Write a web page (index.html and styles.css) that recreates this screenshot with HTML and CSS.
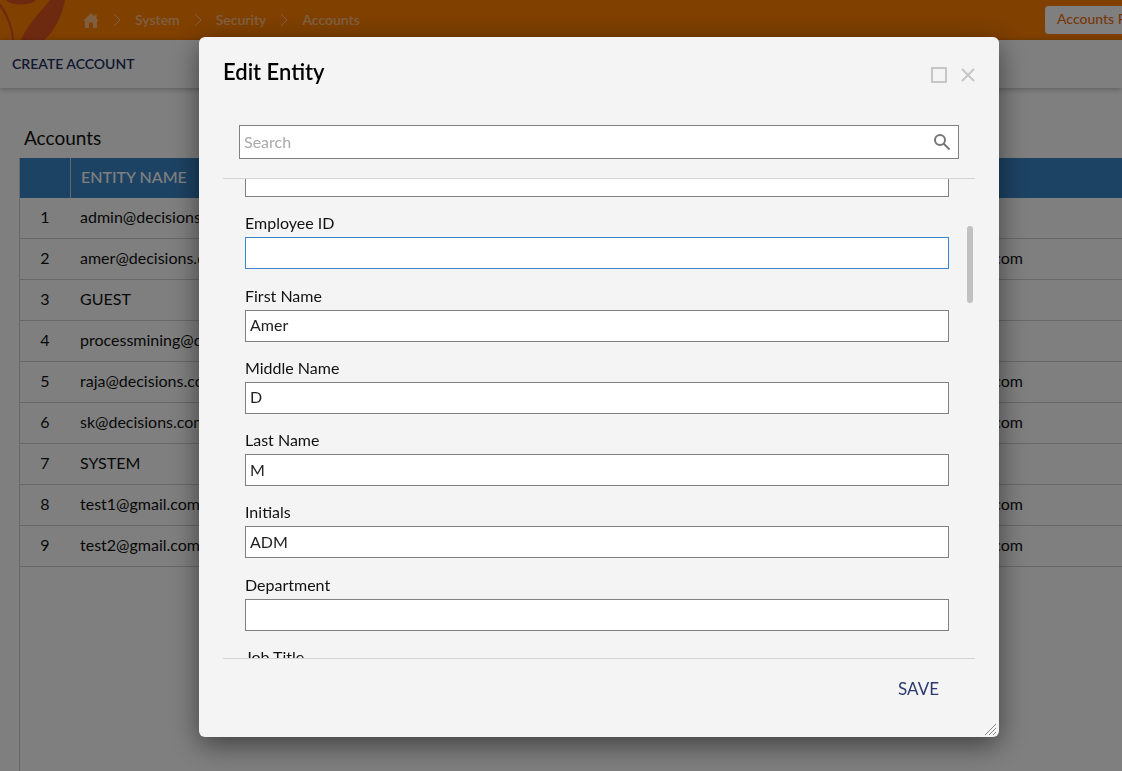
FILE: index.html
```html
<!DOCTYPE html>
<html lang="en">
<head>
<meta charset="utf-8">
<title>Accounts</title>
<link rel="stylesheet" href="styles.css">
</head>
<body>
<div class="app">
  <header class="topbar">
    <svg class="logo" width="70" height="40" viewBox="0 0 70 40" aria-hidden="true">
      <path d="M6 0C10 6 31 6 36 0Z"/>
      <path d="M65 0C62 16 54 32 44 40H21C27 25 38 15 50 0Z"/>
      <path d="M0 7C7 17 11 28 12 40H14C13 27 9 15 0 3Z"/>
    </svg>
    <nav class="crumbs" aria-label="Breadcrumb">
      <a href="#" class="crumb" aria-label="Home"><svg width="16" height="15" viewBox="0 0 16 15"><path d="M8 0 0 8H2V15H6V9.500H10V15H14V8H16L13.500 5.500V1.500H11.500V3.500Z" fill="currentColor"/></svg></a>
      <svg class="sep" width="8" height="14" viewBox="0 0 8 14"><path d="M1 1 7 7 1 13"/></svg>
      <a href="#" class="crumb">System</a>
      <svg class="sep" width="8" height="14" viewBox="0 0 8 14"><path d="M1 1 7 7 1 13"/></svg>
      <a href="#" class="crumb">Security</a>
      <svg class="sep" width="8" height="14" viewBox="0 0 8 14"><path d="M1 1 7 7 1 13"/></svg>
      <a href="#" class="crumb">Accounts</a>
    </nav>
    <button type="button" class="folder">Accounts F</button>
  </header>
  <div class="toolbar"><button type="button" class="create">CREATE ACCOUNT</button></div>
  <main class="content">
    <h1 class="heading">Accounts</h1>
    <div class="grid">
      <table class="accounts">
        <thead><tr><th class="num"></th><th>ENTITY NAME</th><th></th></tr></thead>
        <tbody>
          <tr><td class="num">1</td><td>admin@decisions.com</td><td class="mail"></td></tr>
          <tr><td class="num">2</td><td>amer@decisions.com</td><td class="mail">.com</td></tr>
          <tr><td class="num">3</td><td>GUEST</td><td class="mail"></td></tr>
          <tr><td class="num">4</td><td>processmining@decisions.com</td><td class="mail"></td></tr>
          <tr><td class="num">5</td><td>raja@decisions.com</td><td class="mail">.com</td></tr>
          <tr><td class="num">6</td><td>sk@decisions.com</td><td class="mail">.com</td></tr>
          <tr><td class="num">7</td><td>SYSTEM</td><td class="mail"></td></tr>
          <tr><td class="num">8</td><td>test1@gmail.com</td><td class="mail">.com</td></tr>
          <tr><td class="num">9</td><td>test2@gmail.com</td><td class="mail">.com</td></tr>
        </tbody>
      </table>
    </div>
  </main>
</div>

<div class="overlay">
  <section class="dialog" role="dialog" aria-labelledby="dialog-title">
    <header class="dialog-head">
      <h2 class="dialog-title" id="dialog-title">Edit Entity</h2>
      <button type="button" class="tool" aria-label="Maximize"><svg width="16" height="16" viewBox="0 0 16 16"><path d="M1 1H15V15H1Z"/></svg></button>
      <button type="button" class="tool" aria-label="Close"><svg width="14" height="14" viewBox="0 0 14 14"><path d="M1 1 13 13M13 1 1 13"/></svg></button>
    </header>
    <div class="search">
      <input class="search-input" type="text" placeholder="Search" aria-label="Search">
      <svg width="18" height="18" viewBox="0 0 18 18" aria-hidden="true"><circle cx="7" cy="7" r="5"/><path d="M10.500 10.500 16.500 16.500"/></svg>
    </div>
    <div class="form-area">
      <form class="fields">
        <input class="box" type="text" aria-label="Entity">
        <div class="field"><label for="employee">Employee ID</label><input class="box active" id="employee" type="text"></div>
        <div class="field"><label for="first">First Name</label><input class="box" id="first" type="text" value="Amer"></div>
        <div class="field"><label for="middle">Middle Name</label><input class="box" id="middle" type="text" value="D"></div>
        <div class="field"><label for="last">Last Name</label><input class="box" id="last" type="text" value="M"></div>
        <div class="field"><label for="initials">Initials</label><input class="box" id="initials" type="text" value="ADM"></div>
        <div class="field"><label for="department">Department</label><input class="box" id="department" type="text"></div>
        <div class="field"><span class="label">Job Title</span></div>
      </form>
      <div class="thumb"></div>
    </div>
    <footer class="dialog-foot"><button type="button" class="save">SAVE</button></footer>
    <svg class="grip" width="12" height="12" viewBox="0 0 12 12" aria-hidden="true"><path d="M0 11 11 0M4 11 11 4M8 11 11 8"/></svg>
  </section>
</div>
</body>
</html>
```

FILE: styles.css
```css
* { box-sizing: border-box; }
body {
  margin: 0;
  font: 16px/20px Lato, "Open Sans", sans-serif;
  color: #111;
}
button { border: 0; padding: 0; background: none; font: inherit; cursor: pointer; }
h1, h2 { margin: 0; }

.app { height: 100vh; display: flex; flex-direction: column; overflow: hidden; background: #fff; }

.topbar { flex: none; height: 40px; display: flex; align-items: center; background: #ff8000; overflow: hidden; }
.logo { flex: none; fill: #dd5522; }
.crumbs { flex: 1; display: flex; align-items: center; gap: 14px; padding-left: 13px; font-size: 14px; }
.crumb { color: #fff; opacity: .5; text-decoration: none; font-weight: 600; }
.crumb svg { display: block; }
.sep { fill: none; stroke: #fff; opacity: .5; }
.folder {
  flex: none; width: 77px; height: 28px; padding: 0 0 2px 12px;
  border-radius: 4px 0 0 4px; background: #fff; color: #ee7011;
  font-size: 14px; font-weight: 500; text-align: left; white-space: nowrap; overflow: hidden;
}
.toolbar {
  flex: none; height: 48px; display: flex; align-items: center; padding-left: 12px;
  background: #fff; box-shadow: 0 1px 6px rgba(0, 0, 0, .3);
}
.create { color: #223060; font-size: 14px; font-weight: 600; }

.content { flex: 1; min-height: 0; display: flex; flex-direction: column; padding: 38px 0 0 19px; }
.heading { padding: 0 0 8px 5px; font-size: 19px; line-height: 24px; font-weight: 400; }
.grid { flex: 1; min-height: 0; border-left: 1px solid #d0d0d0; }
.accounts { width: 100%; border-collapse: separate; border-spacing: 0; }
.accounts th { height: 40px; padding: 0 10px 2px; background: #3a86c8; color: #fff; font-weight: 500; text-align: left; }
.accounts td { height: 41px; padding: 0 10px 2px; border-bottom: 1px solid #d0d0d0; }
.accounts .num { width: 50px; padding: 0 0 2px; text-align: center; }
.accounts th + th { border-left: 1px solid #d0d0d0; }
.accounts th:last-child { border-left: 0; }
.accounts .mail { padding-right: 99px; text-align: right; }

.overlay {
  position: fixed; inset: 0; display: flex;
  padding: 37px 123px 34px 199px; background: rgba(0, 0, 0, .5);
}
.dialog {
  position: relative; flex: 1; min-width: 0; display: flex; flex-direction: column;
  padding: 0 24px; border-radius: 6px; background: #f4f4f4;
  box-shadow: 0 8px 28px rgba(0, 0, 0, .5);
}
.dialog-head { display: flex; align-items: center; gap: 14px; height: 76px; }
.dialog-title { flex: 1; padding-bottom: 6px; font-size: 22px; line-height: 28px; font-weight: 600; color: #000; }
.tool svg { display: block; fill: none; stroke: #c6c6c6; stroke-width: 2; }
.search {
  display: flex; align-items: center; height: 34px; margin: 12px 16px 19px;
  padding-right: 7px; border: 1px solid #808080; background: #fff;
}
.search-input { flex: 1; min-width: 0; height: 100%; border: 0; outline: 0; padding: 0 4px 2px; background: none; font: inherit; }
.search-input::placeholder { color: #a9a9a9; opacity: 1; }
.search svg { fill: none; stroke: #777; stroke-width: 2; }

.form-area {
  position: relative; flex: 1; min-height: 0; display: flex; overflow: hidden;
  border-top: 1px solid #d4d4d4; border-bottom: 1px solid #d4d4d4;
}
.fields {
  flex: 1; min-width: 0; display: flex; flex-direction: column; justify-content: space-between;
  margin: -14px 26px -9px 22px;
}
.field { display: flex; flex-direction: column; gap: 4px; }
.box {
  flex: none; width: 100%; height: 32px; padding: 0 4px 2px;
  border: 1px solid #808080; outline: 0; background: #fff; color: #222; font: inherit;
}
.box.active { border-color: #3a86c8; }
.thumb { position: absolute; top: 47px; right: 2px; width: 6px; height: 77px; border-radius: 3px; background: #c1c1c1; }
.dialog-foot { flex: none; height: 78px; display: flex; justify-content: flex-end; padding: 18px 36px 36px; }
.save { color: #2b3970; font-size: 17px; }
.grip { position: absolute; right: 2px; bottom: 1px; fill: none; stroke: #8a8a8a; }
```
